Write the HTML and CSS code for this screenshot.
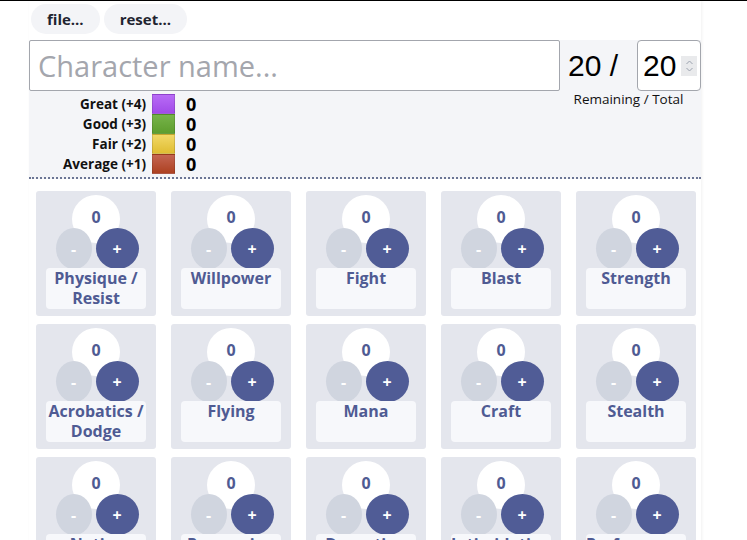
FILE: index.html
```html
<!DOCTYPE html>
<html>
<head>
<meta charset="utf-8">
<link rel="stylesheet" href="styles.css">
</head>
<body>
<div class="page">
  <div class="toolbar">
    <button class="pill">file...</button>
    <button class="pill">reset...</button>
  </div>
  <div class="header">
    <div class="toprow">
      <input class="name" type="text" placeholder="Character name...">
      <div class="points">
        <div class="points-row">
          <span class="remaining">20 /</span>
          <div class="total"><span>20</span><span class="spin"><svg width="9" height="14" viewBox="0 0 9 14"><path d="M1.5 5 L4.5 2 L7.5 5 M1.5 9 L4.5 12 L7.5 9" fill="none" stroke="#9ca3af" stroke-width="1"/></svg></span></div>
        </div>
        <div class="points-label">Remaining / Total</div>
      </div>
    </div>
    <div class="legend">
      <div class="lrow"><span class="lname">Great (+4)</span><span class="sw great"></span><span class="lval">0</span></div>
      <div class="lrow"><span class="lname">Good (+3)</span><span class="sw good"></span><span class="lval">0</span></div>
      <div class="lrow"><span class="lname">Fair (+2)</span><span class="sw fair"></span><span class="lval">0</span></div>
      <div class="lrow"><span class="lname">Average (+1)</span><span class="sw avg"></span><span class="lval">0</span></div>
    </div>
  </div>
  <div class="grid">
    <div class="card"><div class="val">0</div><div class="btns"><button class="minus">-</button><button class="plus">+</button></div><div class="label">Physique / Resist</div></div>
    <div class="card"><div class="val">0</div><div class="btns"><button class="minus">-</button><button class="plus">+</button></div><div class="label">Willpower</div></div>
    <div class="card"><div class="val">0</div><div class="btns"><button class="minus">-</button><button class="plus">+</button></div><div class="label">Fight</div></div>
    <div class="card"><div class="val">0</div><div class="btns"><button class="minus">-</button><button class="plus">+</button></div><div class="label">Blast</div></div>
    <div class="card"><div class="val">0</div><div class="btns"><button class="minus">-</button><button class="plus">+</button></div><div class="label">Strength</div></div>
    <div class="card"><div class="val">0</div><div class="btns"><button class="minus">-</button><button class="plus">+</button></div><div class="label">Acrobatics / Dodge</div></div>
    <div class="card"><div class="val">0</div><div class="btns"><button class="minus">-</button><button class="plus">+</button></div><div class="label">Flying</div></div>
    <div class="card"><div class="val">0</div><div class="btns"><button class="minus">-</button><button class="plus">+</button></div><div class="label">Mana</div></div>
    <div class="card"><div class="val">0</div><div class="btns"><button class="minus">-</button><button class="plus">+</button></div><div class="label">Craft</div></div>
    <div class="card"><div class="val">0</div><div class="btns"><button class="minus">-</button><button class="plus">+</button></div><div class="label">Stealth</div></div>
    <div class="card"><div class="val">0</div><div class="btns"><button class="minus">-</button><button class="plus">+</button></div><div class="label">Notice</div></div>
    <div class="card"><div class="val">0</div><div class="btns"><button class="minus">-</button><button class="plus">+</button></div><div class="label">Persuasion</div></div>
    <div class="card"><div class="val">0</div><div class="btns"><button class="minus">-</button><button class="plus">+</button></div><div class="label">Deception</div></div>
    <div class="card"><div class="val">0</div><div class="btns"><button class="minus">-</button><button class="plus">+</button></div><div class="label">Intimidation</div></div>
    <div class="card"><div class="val">0</div><div class="btns"><button class="minus">-</button><button class="plus">+</button></div><div class="label">Performance</div></div>
  </div>
</div>
</body>
</html>
```
FILE: styles.css
```css
html, body {
  margin: 0;
  padding: 0;
  background: #fff;
}
body {
  border-top: 1px solid #000;
  font-family: "Open Sans", "Liberation Sans", sans-serif;
  overflow: hidden;
  height: 539px;
}
.page {
  margin-left: 29px;
  width: 672px;
  min-height: 600px;
  background: #fff;
  box-shadow: 1px 0 3px rgba(0,0,0,0.06);
}
.toolbar {
  display: flex;
  gap: 4px;
  padding: 3px 2px 6px;
}
.pill {
  height: 30px;
  border: none;
  border-radius: 15px;
  background: #f3f4f7;
  font-family: "Open Sans", sans-serif;
  font-weight: 700;
  font-size: 15px;
  color: #1f2430;
  padding: 0 16px;
}
.header {
  background: #f4f5f8;
}
.toprow {
  display: flex;
  align-items: flex-start;
}
.name {
  box-sizing: border-box;
  width: 531px;
  height: 51px;
  border: 1px solid #a3a6ad;
  border-radius: 2px;
  background: #fff;
  font-family: "Open Sans", sans-serif;
  font-size: 29px;
  padding: 0 8px;
  margin: 0;
  color: #111;
}
.name::placeholder { color: #a4a6ad; }
.points {
  display: flex;
  flex-direction: column;
  align-items: center;
  margin-left: 8px;
}
.points-row {
  display: flex;
  align-items: center;
  gap: 19px;
}
.remaining {
  font-family: "Liberation Sans", sans-serif;
  font-size: 30px;
  color: #000;
}
.total {
  box-sizing: border-box;
  width: 64px;
  height: 51px;
  border: 1px solid #a3a6ad;
  border-radius: 4px;
  background: #fff;
  display: flex;
  align-items: center;
  padding-left: 5px;
  font-family: "Liberation Sans", sans-serif;
  font-size: 30px;
  color: #000;
  gap: 5px;
}
.spin {
  display: flex;
  align-items: center;
  justify-content: center;
  width: 16px;
  height: 20px;
  background: #e9eaec;
}
.points-label {
  font-family: "Open Sans", sans-serif;
  font-size: 13.5px;
  color: #111;
  line-height: 16px;
  margin-left: -12px;
}
.legend {
  display: flex;
  flex-direction: column;
  margin-top: -13px;
  padding-bottom: 3px;
  border-bottom: 2px dotted #6b7594;
}
.lrow {
  display: flex;
  align-items: center;
  height: 20px;
  line-height: 20px;
}
.lname {
  width: 117px;
  text-align: right;
  font-weight: 700;
  font-size: 13.5px;
  color: #111;
}
.sw {
  box-sizing: border-box;
  width: 23px;
  height: 20px;
  margin-left: 6px;
  border: 1px solid rgba(0,0,0,0.12);
}
.great { background: linear-gradient(#b86bf6, #a14be8); }
.good { background: linear-gradient(#76b34a, #5e9e2e); }
.fair { background: linear-gradient(#f1d867, #e0bd33); }
.avg { background: linear-gradient(#c46552, #ad4121); }
.lval {
  display: inline-block;
  margin-left: 11px;
  font-weight: 700;
  font-size: 18px;
  line-height: 18px;
  color: #000;
}
.grid {
  display: grid;
  grid-template-columns: repeat(5, 120px);
  gap: 8px 15px;
  padding: 12px 0 0 7px;
}
.card {
  height: 125px;
  background: #e4e6ed;
  border-radius: 3px;
  display: flex;
  flex-direction: column;
  align-items: center;
  padding-top: 4px;
  box-sizing: border-box;
}
.val {
  width: 48px;
  height: 48px;
  border-radius: 50%;
  background: #fff;
  text-align: center;
  line-height: 45px;
  font-weight: 700;
  font-size: 16px;
  color: #4f5b93;
}
.btns {
  display: flex;
  gap: 4px;
  margin-top: -15px;
  margin-left: 2px;
}
.btns button {
  border: none;
  padding: 0;
  font-family: "Open Sans", sans-serif;
  font-weight: 700;
  font-size: 16px;
  color: #fff;
  border-radius: 50%;
  height: 41px;
}
.minus {
  width: 36px;
  background: #d0d5df;
}
.plus {
  width: 43px;
  background: #505c96;
}
.label {
  box-sizing: border-box;
  width: 100px;
  height: 41px;
  margin-top: -1px;
  background: #f7f8fb;
  border-radius: 4px;
  text-align: center;
  font-weight: 700;
  font-size: 16px;
  line-height: 20px;
  color: #4f5b93;
  position: relative;
  z-index: 0;
}
```
